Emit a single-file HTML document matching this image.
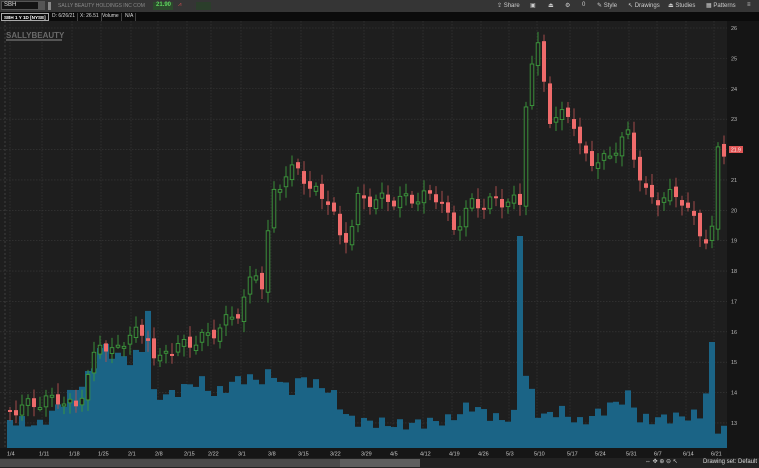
<!DOCTYPE html>
<html><head><meta charset="utf-8"><style>
*{margin:0;padding:0;box-sizing:border-box}
body{width:759px;height:468px;overflow:hidden;background:#1d1d1d;font-family:"Liberation Sans",sans-serif;position:relative}
.top{position:absolute;left:0;top:0;width:759px;height:12px;background:#353535;font-size:6px;color:#ccc}
.top span{position:absolute;top:2px;white-space:nowrap}
.tabs{position:absolute;left:0;top:12px;width:759px;height:9px;background:#0b0b0b;font-size:5px;color:#ddd}
.tabs span{position:absolute;top:1px;height:8px;padding:0 2px;border-right:1px solid #444;line-height:7px;white-space:nowrap}
svg{position:absolute;left:0;top:0}
.bottom{position:absolute;left:0;top:458px;width:759px;height:10px;background:#222}
</style></head><body>
<svg id="c" width="759" height="468"></svg>
<div class="top">
 <div style="position:absolute;left:1px;top:1px;width:44px;height:9px;background:#141414;border:1px solid #555"></div>
 <span style="left:4px;top:2px;color:#ddd">SBH</span>
 <div style="position:absolute;left:38px;top:2px;width:6px;height:7px;background:#555"></div>
 <div style="position:absolute;left:48px;top:2px;width:3px;height:8px;background:#888"></div>
 <span style="left:58px;color:#8a8a8a;font-size:5px;top:3px">SALLY BEAUTY HOLDINGS INC COM</span>
 <div style="position:absolute;left:153px;top:2px;width:20px;height:8px;background:#2c4a2c"></div>
 <span style="left:156px;color:#5fd35f;font-weight:bold">21.90</span>
 <span style="left:178px;color:#d05050">⩘</span>
 <div style="position:absolute;left:196px;top:2px;width:15px;height:8px;background:#2b3e2b"></div>
 <span style="left:497px">⇪ Share</span><span style="left:530px">▣</span><span style="left:548px">⏏</span><span style="left:565px">⚙</span><span style="left:582px">0</span>
 <span style="left:597px">✎ Style</span><span style="left:628px">↖ Drawings</span><span style="left:668px">⏏ Studies</span><span style="left:706px">▦ Patterns</span><span style="left:747px">≡</span>
</div>
<div class="tabs">
 <span style="left:1px;color:#fff;font-weight:bold;border:1px solid #aaa;font-size:4.6px">SBH 1 Y 1D [NYSE]</span>
 <span style="left:50px">D: 6/26/21</span><span style="left:78px">X: 26.51</span><span style="left:100px">Volume</span><span style="left:123px">N/A</span>
</div>
<div class="bottom"><div style="position:absolute;left:0;top:1px;width:420px;height:8px;background:#4a4a4a"></div><div style="position:absolute;left:340px;top:1px;width:80px;height:8px;background:#5e5e5e"></div>
<span style="position:absolute;left:645px;top:0;font-size:6px;color:#ccc">⇔ ✥ ⊕ ⊖ ↖</span>
<span style="position:absolute;left:703px;top:1px;font-size:6px;color:#ddd">Drawing set: Default</span></div>
<script>
var s=document.getElementById('c'),h='';
function R(x,y,w,hh,f){h+='<rect x="'+x+'" y="'+y+'" width="'+w+'" height="'+hh+'" fill="'+f+'"/>';}
function T(x,y,t,f,sz,a){h+='<text x="'+x+'" y="'+y+'" fill="'+f+'" font-size="'+sz+'" font-family="Liberation Sans" '+(a||'')+'>'+t+'</text>';}
R(0,21,759,437,'#1e1e1e');R(727,21,32,437,'#151515');R(0,448,727,10,'#161616');
for(var p=13;p<=26;p++){var y=28+(26-p)*30.38;h+='<line x1="0" x2="727" y1="'+y+'" y2="'+y+'" stroke="#3a3a3a" stroke-width="0.6" stroke-dasharray="1.5,1.5"/>';T(731,y+2,p,'#bbb',5.5);}
var d=[['1/4',10],['1/11',42],['1/18',72],['1/25',101],['2/1',131],['2/8',158],['2/15',187],['2/22',211],['3/1',241],['3/8',271],['3/15',301],['3/22',333],['3/29',364],['4/5',393],['4/12',423],['4/19',452],['4/26',481],['5/3',509],['5/10',537],['5/17',570],['5/24',598],['5/31',629],['6/7',657],['6/14',686],['6/21',714]];
d.forEach(function(q){h+='<line x1="'+q[1]+'" x2="'+q[1]+'" y1="21" y2="448" stroke="#3a3a3a" stroke-width="0.6" stroke-dasharray="1.5,1.5"/>';T(q[1]-3,455.5,q[0],'#ccc',5.5);});
h+='<line x1="5" x2="5" y1="21" y2="448" stroke="#555" stroke-width="0.6" stroke-dasharray="2,2"/>';
T(6,38,'SALLYBEAUTY','#6a6a6a',8,'font-weight="bold"');R(6,39,56,2,'#555');
function interp(k,x){for(var i=0;i<k.length-1;i++){if(x>=k[i][0]&&x<=k[i+1][0]){var t=(x-k[i][0])/(k[i+1][0]-k[i][0]);return k[i][1]+t*(k[i+1][1]-k[i][1]);}}return k[k.length-1][1];}
var ck=[[10,410],[40,402],[60,398],[75,410],[90,370],[101,340],[115,355],[131,330],[145,340],[150,330],[156,372],[165,350],[185,345],[210,335],[240,310],[255,270],[265,290],[270,200],[285,175],[300,168],[310,190],[330,200],[340,240],[350,235],[356,200],[400,200],[440,195],[452,232],[470,205],[510,200],[520,205],[526,100],[533,60],[540,45],[546,95],[552,130],[560,115],[570,110],[580,150],[600,165],[615,148],[630,133],[636,165],[648,200],[680,195],[690,215],[705,240],[712,232],[718,150],[726,150]];
var vk=[[10,420],[40,425],[60,405],[90,375],[101,345],[115,355],[131,360],[142,350],[146,308],[150,308],[154,395],[170,395],[200,380],[215,395],[240,378],[262,380],[272,372],[290,392],[300,378],[330,390],[350,420],[400,425],[450,420],[470,405],[500,420],[517,415],[519,236],[522,236],[525,372],[534,400],[540,418],[560,410],[580,423],[630,395],[640,420],[700,415],[706,392],[709,420],[711,342],[713,342],[716,428]];
var pc=ck[0][1];
for(var i=0;i<120;i++){var x=10+i*6.0;if(x>726)break;
 var vy=interp(vk,x);if(vy>250&&vy!=342)vy+=Math.sin(i*2.3)*6;vy=Math.min(vy,440);R(x-3,vy,6,448-vy,'#1b6486');}
for(var i=0;i<120;i++){var x=10+i*6.0;if(x>726)break;
 var c=interp(ck,x)+Math.sin(i*1.7)*7;var o=pc+Math.sin(i*3.1)*3;pc=c;
 var hi=Math.min(o,c)-3-Math.abs(Math.sin(i*5.3))*8,lo=Math.max(o,c)+3+Math.abs(Math.cos(i*4.1))*8;
 var up=c<o,col=up?'#3c9a3c':'#ef6b6b',t=Math.min(o,c),bh=Math.max(Math.abs(o-c),2);
 h+='<line x1="'+x+'" x2="'+x+'" y1="'+hi+'" y2="'+lo+'" stroke="'+(up?col:'#b05050')+'" stroke-width="0.9"/>';
 if(up)h+='<rect x="'+(x-1.8)+'" y="'+t+'" width="3.6" height="'+bh+'" fill="#1e1e1e" stroke="'+col+'" stroke-width="0.9"/>';
 else R(x-2,t,4,bh,col);}
R(729,146,14,7,'#e05555');T(731,151.5,'21.9','#fff',5);
s.innerHTML=h;
</script>
</body></html>
